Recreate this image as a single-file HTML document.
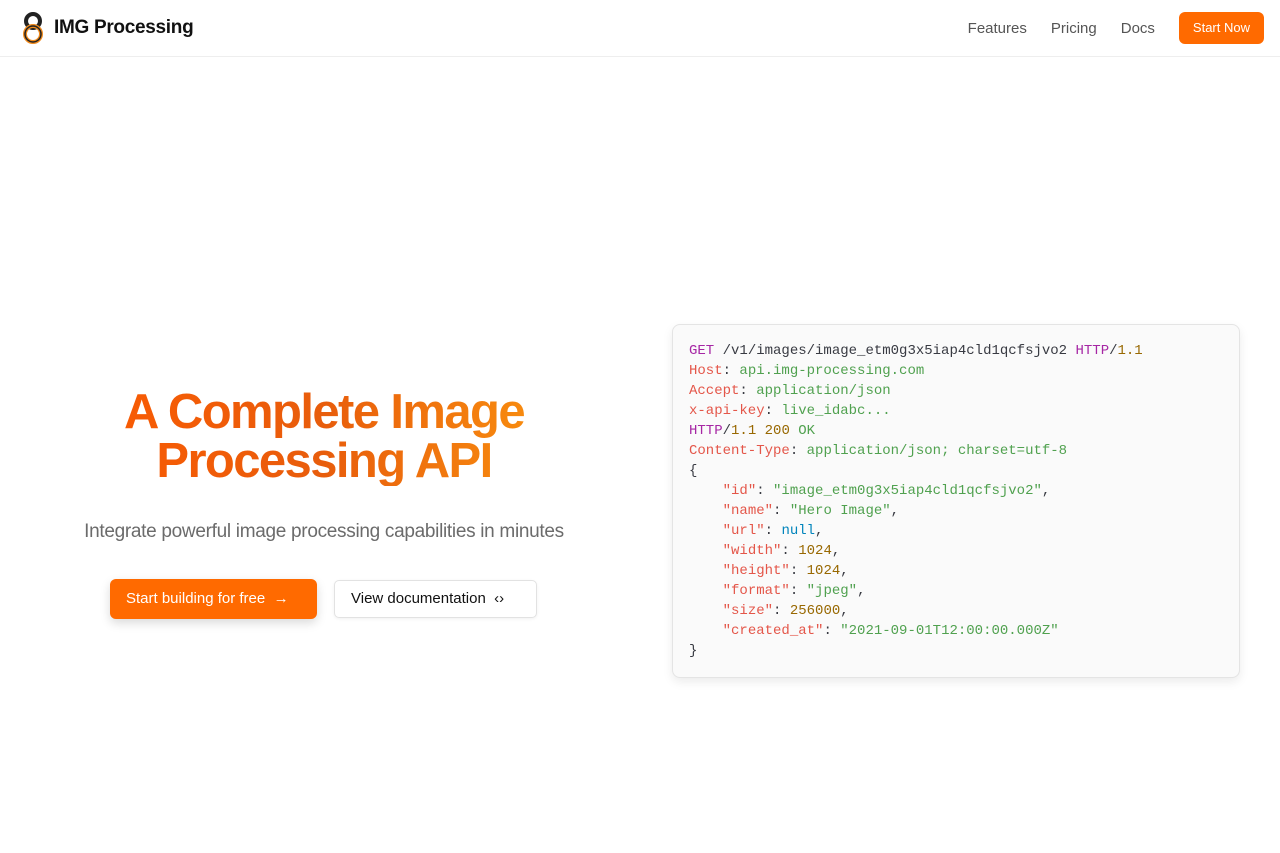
<!DOCTYPE html>
<html><head><meta charset="utf-8"><style>
*{box-sizing:border-box;margin:0;padding:0}
body{width:1280px;height:853px;background:#fff;font-family:"Liberation Sans",sans-serif;position:relative;overflow:hidden}
.nav{height:57px;border-bottom:1px solid #eee;position:relative}
.logo{position:absolute;left:18px;top:12px;display:flex;align-items:center}
.logo span{font-weight:bold;font-size:19px;margin-left:6px;letter-spacing:-0.3px;color:#111}
.links{position:absolute;right:16px;top:12px;display:flex;align-items:center;font-size:15px;color:#555}
.links a{margin-right:24px}
.btn{background:#ff6a00;color:#fff;font-size:13px;padding:0 14px;height:32px;line-height:32px;border-radius:6px}
h1{position:absolute;left:24px;width:600px;top:388px;text-align:center;font-size:49px;line-height:49px;font-weight:bold;letter-spacing:-1.6px;background:linear-gradient(90deg,#ff5a00,#e85d0c 50%,#ffa010);-webkit-background-clip:text;background-clip:text;color:transparent}
.sub{position:absolute;left:24px;width:600px;top:521px;text-align:center;font-size:19px;color:#6b6b6b;letter-spacing:-0.3px}
.b1{position:absolute;left:110px;top:579px;width:207px;height:40px;background:#ff6a00;color:#fff;border-radius:6px;font-size:15px;line-height:40px;padding-left:16px;box-shadow:0 4px 10px rgba(0,0,0,.15)}
.b2{position:absolute;left:334px;top:580px;width:203px;height:38px;border:1px solid #e2e2e2;border-radius:5px;font-size:15px;line-height:36px;padding-left:16px;color:#111;box-shadow:0 1px 3px rgba(0,0,0,.06)}
.code{position:absolute;left:672px;top:324px;width:568px;height:354px;background:#fafafa;border:1px solid #e4e4e4;border-radius:8px;box-shadow:0 4px 10px rgba(0,0,0,.08);padding:16px 16px;font-family:"Liberation Mono",monospace;font-size:14px;line-height:20px;color:#383a42;white-space:pre}
.k{color:#a626a4}.n{color:#986801}.r{color:#e45649}.g{color:#50a14f}.b{color:#0184bc}
</style></head><body>
<div class="nav">
<div class="logo"><svg width="30" height="32" viewBox="0 0 30 32"><circle cx="15" cy="9" r="7" fill="none" stroke="#222" stroke-width="4"/><circle cx="15" cy="22" r="8" fill="none" stroke="#f08a1c" stroke-width="4"/><circle cx="15" cy="22" r="8" fill="none" stroke="#222" stroke-width="1.5"/></svg><span>IMG Processing</span></div>
<div class="links"><a>Features</a><a>Pricing</a><a>Docs</a><div class="btn">Start Now</div></div>
</div>
<h1>A Complete Image<br>Processing API</h1>
<div class="sub">Integrate powerful image processing capabilities in minutes</div>
<div class="b1">Start building for free &nbsp;→</div>
<div class="b2">View documentation &nbsp;‹›</div>
<div class="code"><span class="k">GET</span> /v1/images/image_etm0g3x5iap4cld1qcfsjvo2 <span class="k">HTTP</span>/<span class="n">1.1</span>
<span class="r">Host</span>: <span class="g">api.img-processing.com</span>
<span class="r">Accept</span>: <span class="g">application/json</span>
<span class="r">x-api-key</span>: <span class="g">live_idabc...</span>
<span class="k">HTTP</span>/<span class="n">1.1</span> <span class="n">200</span> <span class="g">OK</span>
<span class="r">Content-Type</span>: <span class="g">application/json; charset=utf-8</span>
{
    <span class="r">"id"</span>: <span class="g">"image_etm0g3x5iap4cld1qcfsjvo2"</span>,
    <span class="r">"name"</span>: <span class="g">"Hero Image"</span>,
    <span class="r">"url"</span>: <span class="b">null</span>,
    <span class="r">"width"</span>: <span class="n">1024</span>,
    <span class="r">"height"</span>: <span class="n">1024</span>,
    <span class="r">"format"</span>: <span class="g">"jpeg"</span>,
    <span class="r">"size"</span>: <span class="n">256000</span>,
    <span class="r">"created_at"</span>: <span class="g">"2021-09-01T12:00:00.000Z"</span>
}</div>
</body></html>
